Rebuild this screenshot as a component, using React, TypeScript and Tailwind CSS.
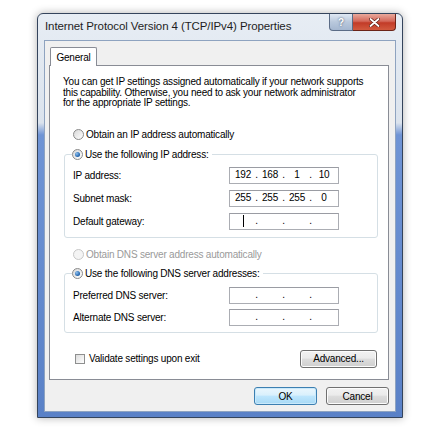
import React from 'react';

function Radio({ checked, disabled }: { checked?: boolean; disabled?: boolean }) {
  return (
    <span
      className={`inline-flex h-[11px] w-[11px] shrink-0 items-center justify-center rounded-full border ${
        disabled ? 'border-[#c8c8c8] bg-[#f4f4f4]' : 'border-[#8a8a8a] bg-[linear-gradient(135deg,#d8d8d8,#ffffff)]'
      }`}
    >
      {checked && <span className="h-[5px] w-[5px] rounded-full bg-[radial-gradient(circle_at_35%_35%,#8fc1f0,#1c5fa8_70%)]" />}
    </span>
  );
}

function IpField({ value, caret }: { value?: string[]; caret?: boolean }) {
  const parts = value ?? ['', '', '', ''];
  return (
    <div className="flex h-[17px] w-[110px] items-center border border-[#abadb3] border-t-[#9a9ca3] bg-white pl-[2px] text-[10px] leading-none">
      {parts.map((p, i) => (
        <React.Fragment key={i}>
          <span className="relative flex h-full w-[22px] items-center justify-center">
            {caret && i === 0 && <span className="h-[12px] w-[1px] bg-black" />}
            {p}
          </span>
          {i < 3 && <span className="w-[5px] text-center">.</span>}
        </React.Fragment>
      ))}
    </div>
  );
}

function Row({ label, children }: { label: string; children: React.ReactNode }) {
  return (
    <div className="grid grid-cols-[156px_110px] items-center">
      <span>{label}</span>
      {children}
    </div>
  );
}

function Button({ children, primary }: { children: React.ReactNode; primary?: boolean }) {
  return (
    <button
      className={`flex h-[18px] w-full items-center justify-center rounded-[3px] border text-[10px] text-black ${
        primary
          ? 'border-[#3c7fb1] bg-[linear-gradient(to_bottom,#eaf6fd_0%,#d9f0fc_45%,#bee6fd_50%,#a7d9f5_100%)] shadow-[inset_0_0_0_1px_#c9e9fb]'
          : 'border-[#707070] bg-[linear-gradient(to_bottom,#f2f2f2_0%,#ebebeb_45%,#dddddd_50%,#cfcfcf_100%)] shadow-[inset_0_0_0_1px_#fcfcfc]'
      }`}
    >
      {children}
    </button>
  );
}

export default function App() {
  return (
    <div className="h-[431px] w-[433px] bg-white pl-[37px] pt-[13px] font-['Liberation_Sans',Arial,sans-serif] text-[10px] tracking-[-0.2px] text-black">
      {/* window frame */}
      <div className="flex h-[405px] w-[366px] flex-col rounded-t-[6px] border border-[#34445c] bg-[linear-gradient(to_bottom,#e7edf4_0%,#dbe3ed_27%,#6f94d5_30%,#5a81c7_100%)] px-[6px] pb-[5px] shadow-[0_0_8px_rgba(0,0,0,0.3)]">
        {/* title bar */}
        <div className="flex h-[26px] items-start justify-between">
          <span className="pl-[1px] pt-[7px] text-[11.5px] leading-none tracking-[-0.1px] text-[#1e1e1e]">Internet Protocol Version 4 (TCP/IPv4) Properties</span>
          <div className="flex">
            <div className="flex h-[17px] w-[24px] items-center justify-center rounded-bl-[4px] border border-t-0 border-[#5b6c86] bg-[linear-gradient(to_bottom,#dfe8f3,#b9c8dc_50%,#a5b7d0)] text-[10px] font-bold text-white [text-shadow:0_0_2px_#33445e]">
              ?
            </div>
            <div className="flex h-[17px] w-[43px] items-center justify-center rounded-br-[4px] border border-l-0 border-t-0 border-[#6b2418] bg-[linear-gradient(to_bottom,#e9a99c,#d4685a_45%,#c23b28_55%,#d25a3f)]">
              <svg width="11" height="9" viewBox="0 0 11 9">
                <path d="M1.5 1 L9.5 8 M9.5 1 L1.5 8" stroke="#5c1a10" strokeWidth="3.2" strokeLinecap="round" />
                <path d="M1.5 1 L9.5 8 M9.5 1 L1.5 8" stroke="#ffffff" strokeWidth="1.8" strokeLinecap="round" />
              </svg>
            </div>
          </div>
        </div>

        {/* client area */}
        <div className="flex flex-1 flex-col border border-[#8ea3c0] bg-[#f0f0f0] px-[4px] pt-[5px]">
          {/* tab */}
          <div className="flex">
            <div className="relative top-[1px] ml-[1px] flex h-[19px] w-[47px] items-center justify-center rounded-t-[2px] border border-b-0 border-[#898c95] bg-white text-[10px]">
              General
            </div>
          </div>

          {/* panel */}
          <div className="flex h-[315px] w-[340px] flex-col border border-[#898c95] bg-white pt-[11px] pb-[12px]">
            <p className="ml-[13px] leading-[10.5px]">
              You can get IP settings assigned automatically if your network supports
              <br />
              this capability. Otherwise, you need to ask your network administrator
              <br />
              for the appropriate IP settings.
            </p>

            <div className="ml-[23px] mt-[20px] flex h-[12px] items-center gap-[2px]">
              <Radio />
              <span>Obtain an IP address automatically</span>
            </div>

            <fieldset className="ml-[14px] mt-[8px] w-[314px] rounded-[3px] border border-[#d5dfe5] pb-[7px] pl-[8px] pt-[6px]">
              <legend className="-ml-[1px] flex h-[12px] items-center gap-[2px] pr-[3px]">
                <Radio checked />
                <span>Use the following IP address:</span>
              </legend>
              <div className="flex flex-col gap-[6px]">
                <Row label="IP address:">
                  <IpField value={['192', '168', '1', '10']} />
                </Row>
                <Row label="Subnet mask:">
                  <IpField value={['255', '255', '255', '0']} />
                </Row>
                <Row label="Default gateway:">
                  <IpField caret />
                </Row>
              </div>
            </fieldset>

            <div className="ml-[23px] mt-[11px] flex h-[12px] items-center gap-[2px] text-[#9a9a9a]">
              <Radio disabled />
              <span>Obtain DNS server address automatically</span>
            </div>

            <fieldset className="ml-[14px] mt-[7px] w-[314px] rounded-[3px] border border-[#d5dfe5] pb-[6px] pl-[8px] pt-[7px]">
              <legend className="-ml-[1px] flex h-[12px] items-center gap-[2px] pr-[3px]">
                <Radio checked />
                <span>Use the following DNS server addresses:</span>
              </legend>
              <div className="flex flex-col gap-[5px]">
                <Row label="Preferred DNS server:">
                  <IpField />
                </Row>
                <Row label="Alternate DNS server:">
                  <IpField />
                </Row>
              </div>
            </fieldset>

            <div className="ml-[25px] mr-[11px] mt-[17px] flex items-center justify-between">
              <div className="flex items-center gap-[4px]">
                <span className="h-[10px] w-[10px] border border-[#8e8f8f] bg-[linear-gradient(135deg,#dcdcdc,#ffffff)]" />
                <span>Validate settings upon exit</span>
              </div>
              <div className="w-[77px]">
                <Button>Advanced...</Button>
              </div>
            </div>
          </div>

          {/* dialog buttons */}
          <div className="mt-[7px] flex justify-end gap-[9px] pr-[2px]">
            <div className="w-[63px]">
              <Button primary>OK</Button>
            </div>
            <div className="w-[63px]">
              <Button>Cancel</Button>
            </div>
          </div>
        </div>
      </div>
    </div>
  );
}
